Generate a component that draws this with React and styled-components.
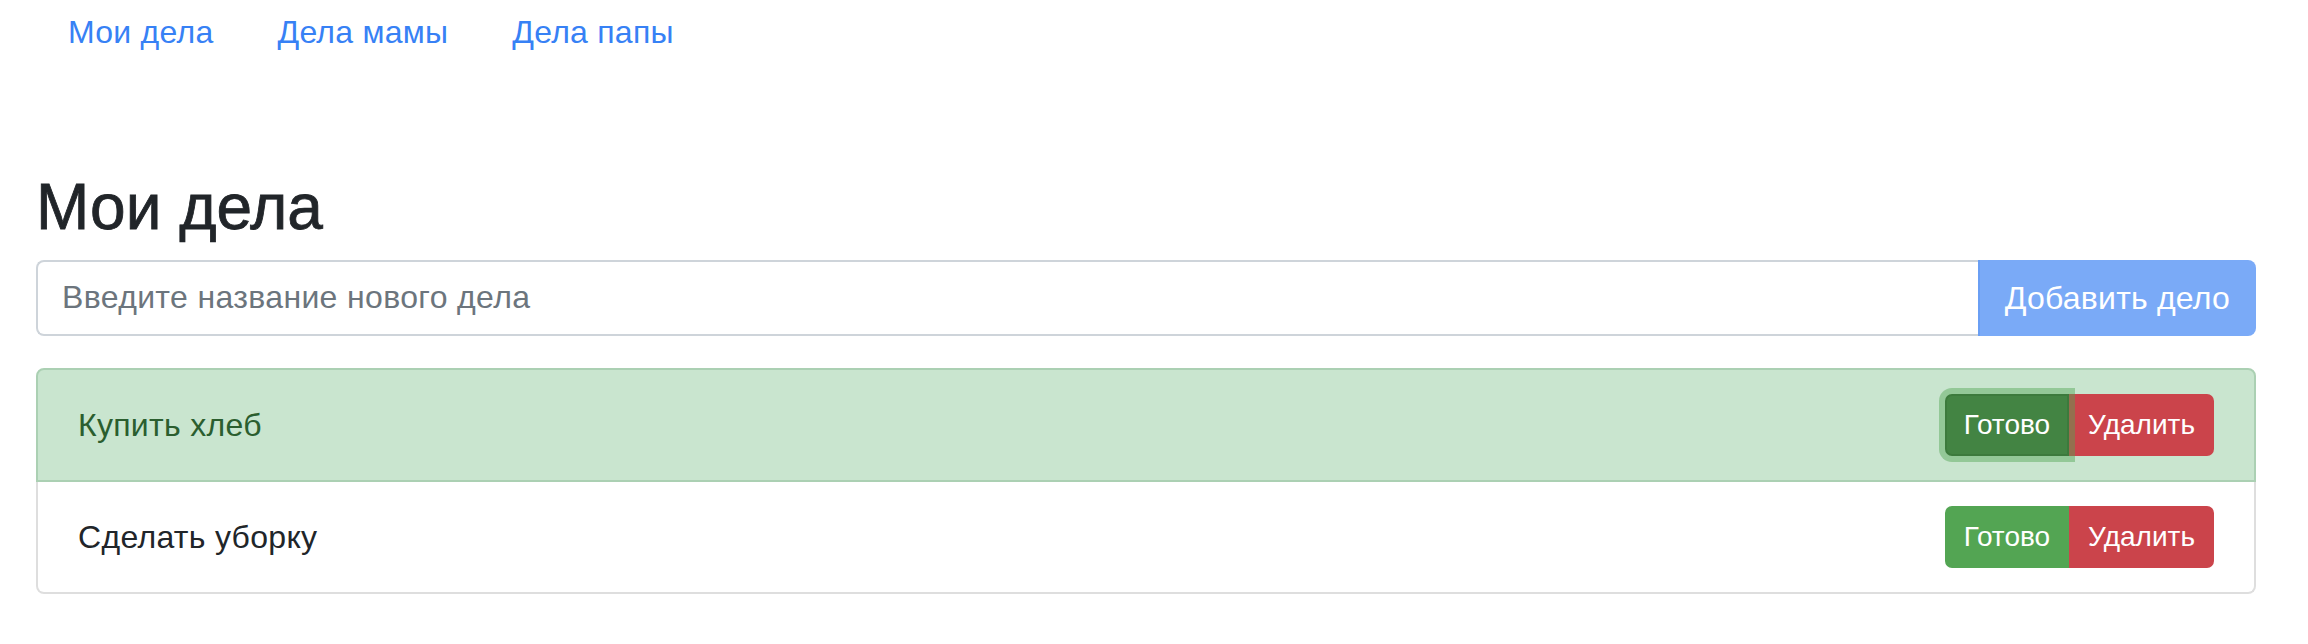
import React, { useState } from 'react';
import styled, { createGlobalStyle } from 'styled-components';

const GlobalStyle = createGlobalStyle`
  * { box-sizing: border-box; }
  body {
    margin: 0;
    background: #fff;
    font-family: "Liberation Sans", Arial, sans-serif;
    color: #212529;
  }
`;

const tabs = ['Мои дела', 'Дела мамы', 'Дела папы'];

const initialTasks = [
  { id: 1, title: 'Купить хлеб', done: true },
  { id: 2, title: 'Сделать уборку', done: false },
];

const App = () => {
  const [tasks, setTasks] = useState(initialTasks);
  const [value, setValue] = useState('');

  const toggle = (id) => {
    setTasks(tasks.map(t => (t.id === id ? { ...t, done: !t.done } : t)));
  };

  const remove = (id) => {
    setTasks(tasks.filter(t => t.id !== id));
  };

  const add = () => {
    if (!value.trim()) return;
    setTasks([...tasks, { id: Date.now(), title: value, done: false }]);
    setValue('');
  };

  return (
    <>
      <GlobalStyle />
      <Page>
        <Nav>
          {tabs.map(tab => (
            <NavLink key={tab} href="#">{tab}</NavLink>
          ))}
        </Nav>
        <Content>
          <Title>Мои дела</Title>
          <InputGroup>
            <TaskInput
              placeholder="Введите название нового дела"
              value={value}
              onChange={e => setValue(e.target.value)}
            />
            <AddButton disabled={!value.trim()} onClick={add}>Добавить дело</AddButton>
          </InputGroup>
          <TaskList>
            {tasks.map((task, idx) => (
              <TaskItem key={task.id} $done={task.done} $first={idx === 0}>
                <TaskText>{task.title}</TaskText>
                <BtnGroup>
                  <DoneButton $focused={task.done} onClick={() => toggle(task.id)}>Готово</DoneButton>
                  <DeleteButton onClick={() => remove(task.id)}>Удалить</DeleteButton>
                </BtnGroup>
              </TaskItem>
            ))}
          </TaskList>
        </Content>
      </Page>
    </>
  );
};

export default App;

const Page = styled.div`
  padding: 1px 52px 0 36px;
`;

const Nav = styled.nav`
  display: flex;
`;

const NavLink = styled.a`
  display: block;
  padding: 7px 32px;
  font-size: 32px;
  line-height: 48px;
  letter-spacing: 0.25px;
  color: #3781f5;
  text-decoration: none;
`;

const Content = styled.div`
  padding-top: 106px;
`;

const Title = styled.h1`
  margin: 0 0 14px;
  font-size: 64px;
  line-height: 1.2;
  font-weight: 400;
  -webkit-text-stroke: 0.8px #212529;
  color: #212529;
`;

const InputGroup = styled.div`
  display: flex;
  height: 76px;
`;

const TaskInput = styled.input`
  flex: 1;
  min-width: 0;
  height: 76px;
  padding: 12px 24px;
  font-family: "Liberation Sans", Arial, sans-serif;
  font-size: 32px;
  line-height: 48px;
  letter-spacing: 0.35px;
  color: #495057;
  border: 2px solid #ced4da;
  border-right: none;
  border-radius: 8px 0 0 8px;
  outline: none;
  &::placeholder {
    color: #6c757d;
  }
`;

const AddButton = styled.button`
  height: 76px;
  padding: 12px 26px 12px 25px;
  font-family: "Liberation Sans", Arial, sans-serif;
  font-size: 32px;
  line-height: 48px;
  letter-spacing: 0.2px;
  color: #fff;
  background: #7aaaf7;
  border: none;
  border-left: 2px solid #6a9ff4;
  border-radius: 0 8px 8px 0;
  cursor: pointer;
  &:disabled {
    cursor: default;
  }
`;

const TaskList = styled.ul`
  margin: 32px 0 0;
  padding: 0;
  list-style: none;
  border-radius: 8px;
`;

const TaskItem = styled.li`
  display: flex;
  align-items: center;
  justify-content: space-between;
  padding: 24px 40px;
  font-size: 32px;
  line-height: 48px;
  letter-spacing: 0.3px;
  border: 2px solid ${p => (p.$done ? '#abd0b3' : '#dedede')};
  border-top-width: ${p => (p.$first ? '2px' : '0')};
  background: ${p => (p.$done ? '#c9e5cf' : '#fff')};
  color: ${p => (p.$done ? '#2b5e2f' : '#212529')};
  &:first-child {
    border-radius: 8px 8px 0 0;
  }
  &:last-child {
    border-radius: 0 0 8px 8px;
  }
`;

const TaskText = styled.span`
  display: block;
`;

const BtnGroup = styled.div`
  display: flex;
  position: relative;
`;

const SmallButton = styled.button`
  position: relative;
  height: 62px;
  padding: 8px 17px;
  font-family: "Liberation Sans", Arial, sans-serif;
  font-size: 28px;
  line-height: 42px;
  color: #fff;
  border: 2px solid transparent;
  cursor: pointer;
  outline: none;
`;

const DoneButton = styled(SmallButton)`
  border-radius: 7px 0 0 7px;
  background: ${p => (p.$focused ? '#438443' : '#53a553')};
  border-color: ${p => (p.$focused ? '#3c7a3c' : '#53a553')};
  z-index: ${p => (p.$focused ? 1 : 0)};
  box-shadow: ${p => (p.$focused ? '0 0 0 6px rgba(83, 165, 83, 0.45)' : 'none')};
`;

const DeleteButton = styled(SmallButton)`
  border-radius: 0 7px 7px 0;
  background: #cb444b;
  border-color: #cb444b;
`;
